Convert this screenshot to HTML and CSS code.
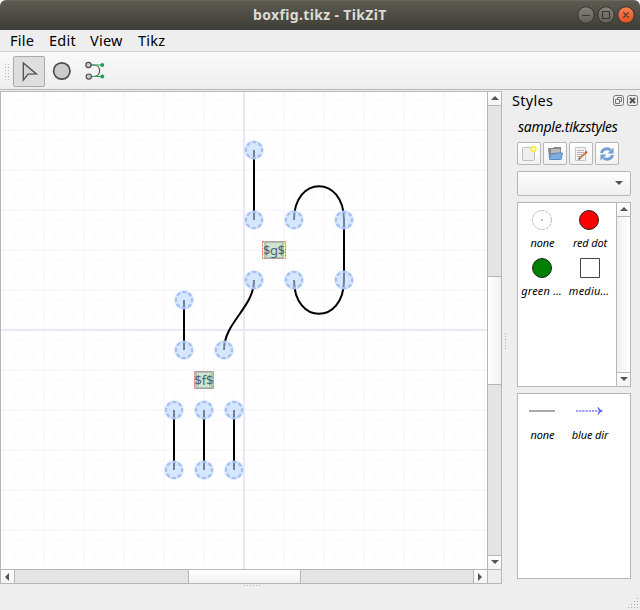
FILE: index.html
```html
<!DOCTYPE html>
<html lang="en">
<head>
<meta charset="utf-8">
<title>boxfig.tikz - TikZiT</title>
<link rel="stylesheet" href="styles.css">
</head>
<body>
<div class="window">
  <header class="titlebar">
    <span class="title">boxfig.tikz - TikZiT</span>
    <svg class="controls" width="58" height="18" viewBox="0 0 58 18">
      <defs>
        <linearGradient id="gray" x2="0" y2="1"><stop stop-color="#85847b"/><stop offset="1" stop-color="#605f58"/></linearGradient>
        <linearGradient id="orange" x2="0" y2="1"><stop stop-color="#f68256"/><stop offset="1" stop-color="#e2521f"/></linearGradient>
      </defs>
      <g stroke="#34332e"><circle cx="9" cy="9" r="8.2" fill="url(#gray)"/><circle cx="29" cy="9" r="8.2" fill="url(#gray)"/><circle cx="49" cy="9" r="8.2" fill="url(#orange)"/></g>
      <path d="M5 9.500h8M25.500 5.500h7v7h-7zM46.300 6.300l5.400 5.400m0-5.400l-5.400 5.400" fill="none" stroke="#383731" stroke-width="1.200"/>
    </svg>
  </header>
  <nav class="menubar"><span class="m1">File</span><span class="m2">Edit</span><span class="m3">View</span><span class="m4">Tikz</span></nav>
  <div class="toolbar">
    <svg class="grip" width="6" height="18"><path d="M.5 1v17M3.500 1v17" stroke="#b8b8b8" stroke-dasharray="1 2"/></svg>
    <div class="tool active"><svg width="32" height="32" viewBox="13 55.500 32 32"><path d="M23.300 62.500v17.200l4.800-6.100 8.300-.2z" fill="#d5d5d5" stroke="#505050" stroke-width="1.300"/></svg></div>
    <div class="tool"><svg width="32" height="32" viewBox="46 56 32 32"><circle cx="61.800" cy="71" r="8.200" fill="#ccc" stroke="#4d4d4d" stroke-width="1.700"/></svg></div>
    <div class="tool"><svg width="32" height="32" viewBox="79 56 32 32"><path d="M91 65h3c7.500 0 7.500 11.500 0 11.500h-3" fill="none" stroke="#555" stroke-width="1.200"/><path d="M91 65h11M91 76.500h11" stroke="#23a455" stroke-width="1.200"/><g fill="#ccc" stroke="#505050" stroke-width="1.200"><circle cx="88.500" cy="65" r="2.600"/><circle cx="88.800" cy="76.600" r="2.600"/></g><circle cx="102.300" cy="65" r="1.900" fill="#16a34b"/><circle cx="102.300" cy="76.500" r="1.900" fill="#16a34b"/></svg></div>
  </div>
  <main class="main">
    <section class="editor">
      <svg class="canvas" width="486" height="477" viewBox="1 92 486 477">
        <defs>
          <pattern id="minor" x="-1" y="-5" width="10" height="10" patternUnits="userSpaceOnUse"><path d="M5 0v10M0 5h10" stroke="#fafaff"/></pattern>
          <pattern id="major" x="-16" y="-10" width="40" height="40" patternUnits="userSpaceOnUse"><path d="M20 0v40M0 20h40" stroke="#f4f4fc"/></pattern>
          <g id="node"><circle r="9.800" fill="#bbd8ff" fill-opacity=".6"/><circle r="8" fill="none" stroke="#a8bfee" stroke-width="2.200" stroke-dasharray="4.200 2.080" stroke-dashoffset="2"/></g>
        </defs>
        <rect x="1" y="92" width="486" height="477" fill="#fff"/>
        <rect x="1" y="92" width="486" height="477" fill="url(#minor)"/>
        <rect x="1" y="92" width="486" height="477" fill="url(#major)"/>
        <path d="M244 92v477M1 330h486" stroke="#e8e8f6" stroke-width="2"/>
        <path d="M254 150v70M184 300v50M174 410v60M204 410v60M234 410v60M344 220v60M294 220C294 175 344 175 344 220M294 280C294 325 344 325 344 280M254 280C254 308 224 322 224 350" fill="none" stroke="#000" stroke-width="2"/>
        <use href="#node" x="254" y="150"/><use href="#node" x="254" y="220"/><use href="#node" x="294" y="220"/><use href="#node" x="344" y="220"/>
        <use href="#node" x="254" y="280"/><use href="#node" x="294" y="280"/><use href="#node" x="344" y="280"/>
        <use href="#node" x="184" y="300"/><use href="#node" x="184" y="350"/><use href="#node" x="224" y="350"/>
        <use href="#node" x="174" y="410"/><use href="#node" x="204" y="410"/><use href="#node" x="234" y="410"/>
        <use href="#node" x="174" y="470"/><use href="#node" x="204" y="470"/><use href="#node" x="234" y="470"/>
        <g class="label">
          <rect x="262.500" y="241.500" width="23" height="17" fill="#ffffa0" stroke="#e36565" stroke-dasharray="2 1"/>
          <rect x="265" y="242" width="18" height="16" fill="#cde5d0" stroke="#8caaa4" stroke-width="1.200"/>
          <text x="263" y="255" textLength="22">$g$</text>
          <rect x="194.500" y="371.500" width="19" height="17" fill="#f4ecc0" stroke="#e36565" stroke-dasharray="2 1"/>
          <rect x="196" y="372" width="16" height="16" fill="#cde5d0" stroke="#8caaa4" stroke-width="1.200"/>
          <text x="194.500" y="385" textLength="19">$f$</text>
        </g>
      </svg>
      <div class="vbar"><i class="arrow up"></i><i class="vthumb"></i><i class="arrow down"></i></div>
      <div class="hbar"><i class="arrow left"></i><i class="hthumb"></i><i class="arrow right"></i></div>
      <div class="corner"></div>
    </section>
    <svg class="splitter" width="4" height="18"><path d="M1.500 1v17" stroke="#aaa" stroke-dasharray="1 2"/></svg>
    <aside class="dock">
      <div class="dockhead"><span>Styles</span>
        <svg width="25" height="11" viewBox="0 0 25 11" fill="none" stroke="#777"><rect x=".5" y=".5" width="10" height="10" rx="2"/><rect x="14.500" y=".5" width="10" height="10" rx="2"/><path d="M4.500 4V2.500h4v4H7M2.500 4.500h4v4h-4z"/><path d="M17 3l5 5m0-5l-5 5" stroke="#555" stroke-width="2"/></svg>
      </div>
      <div class="file">sample.tikzstyles</div>
      <div class="buttons">
        <span class="btn"><svg width="16" height="16"><rect x="1.500" y="1.500" width="12" height="13" rx="1" fill="#eee" stroke="#bebebe"/><circle cx="12.500" cy="3" r="2.200" fill="#fff" stroke="#f5ed45" stroke-width="2"/></svg></span>
        <span class="btn"><svg width="16" height="16"><path d="M1 2h5l1-1h7v11H2z" fill="#85898c"/><path d="M4 3h9v4H4z" fill="#bbb"/><path d="M2.500 13.500l1-5.500h4l1-1h7l-1.500 6.500z" fill="#80aede" stroke="#5a8bc0"/></svg></span>
        <span class="btn"><svg width="16" height="16"><path d="M2.500 1.500h10v13h-10z" fill="#f3f3f3" stroke="#c4c4c4"/><path d="M4 4.500h7M4 6.500h7M4 8.500h5M4 10.500h4" stroke="#b5b5b5"/><path d="M7 12l6-5.500" stroke="#c97f3a" stroke-width="2"/><path d="M5.500 13.500L7 12" stroke="#333" stroke-width="1.300"/><path d="M12.500 7l1.500-1.400" stroke="#d44" stroke-width="2"/></svg></span>
        <span class="btn"><svg width="16" height="16"><path d="M2.500 7a5.500 5 0 0 1 9-3M13.500 9a5.500 5 0 0 1-9 3" fill="none" stroke="#6e9dd3" stroke-width="2.800"/><path d="M14.500 1.500v6H8.500zM1.500 14.500v-6h6z" fill="#6e9dd3"/></svg></span>
      </div>
      <div class="combo"><i></i></div>
      <div class="list nodes">
        <div class="items">
          <div class="item"><svg width="22" height="22"><circle cx="11" cy="11" r="9.500" fill="#fff" stroke="#b3b3dd" stroke-dasharray="3 1"/><circle cx="11" cy="11" r="1" fill="#aab"/></svg><span>none</span></div>
          <div class="item"><svg width="22" height="22"><circle cx="11" cy="11" r="9.500" fill="#f00" stroke="#222"/></svg><span>red dot</span></div>
          <div class="item"><svg width="22" height="22"><circle cx="11" cy="11" r="9.500" fill="#008000" stroke="#222"/></svg><span class="clipped">green …</span></div>
          <div class="item"><svg width="22" height="22"><path d="M2.500 1.500h19v19h-19z" fill="#fff" stroke="#444"/></svg><span class="clipped">mediu…</span></div>
        </div>
        <div class="listbar"><i class="arrow up"></i><i class="arrow down"></i></div>
      </div>
      <div class="list edges">
        <div class="items">
          <div class="item"><svg width="28" height="22"><path d="M1 9h26" stroke="#aaa" stroke-width="2"/></svg><span>none</span></div>
          <div class="item"><svg width="28" height="22"><path d="M1 9h24" stroke="#9c9cff" stroke-width="1.800" stroke-dasharray="2.200 1"/><path d="M23 5.500q1 2.800 3.500 3.500q-2.500.7-3.500 3.500" fill="none" stroke="#44f" stroke-width="1.200"/></svg><span>blue dir</span></div>
        </div>
      </div>
    </aside>
  </main>
  <footer class="status">
    <svg class="hgrip" width="18" height="3"><path d="M1 1.500h17" stroke="#b0b0b0" stroke-dasharray="1 2"/></svg>
    <svg class="sizer" width="12" height="12"><path d="M1 10.500h11M4 7.500h8M7 4.500h5M10 1.500h2" stroke="#aaa" stroke-dasharray="1 2"/></svg>
  </footer>
</div>
</body>
</html>
```
FILE: styles.css
```css
* { box-sizing: border-box; }
body { margin: 0; background: #fff; font: 14px "Noto Sans", "Open Sans", sans-serif; color: #000; }
svg { display: block; flex: none; }
.window { width: 640px; height: 610px; background: #eee; border-radius: 6px 6px 0 0; overflow: hidden; display: flex; flex-direction: column; }
.titlebar { height: 30px; flex: none; background: linear-gradient(#5c5a51, #3e3d37); border-top: 1px solid #68665d; display: flex; align-items: center; padding: 0 5px 0 253px; justify-content: space-between; }
.title { color: #dfdbd2; font-weight: 700; font-size: 14px; line-height: 28px; letter-spacing: .35px; margin-top: -2px; white-space: nowrap; }
.controls { margin-top: -1px; }
.menubar { height: 22px; flex: none; border-bottom: 1px solid #cfcfcf; display: flex; padding-left: 10px; line-height: 21px; font-size: 14.5px; letter-spacing: .25px; }
.m1 { width: 39px; }
.m2 { width: 41px; }
.m3 { width: 48px; }
.toolbar { height: 38px; flex: none; background: linear-gradient(#f9f9f9, #eee); border-bottom: 1px solid #b6b6b6; display: flex; padding: 4px 0 0 5px; }
.grip { margin: 7px 2px 0 0; }
.tool { width: 32px; height: 31px; margin-right: 1px; }
.active { background: #dedede; border: 1px solid #aaa; border-radius: 2px; }
.active svg { margin: -1px; }
.main { display: flex; height: 494px; flex: none; }
.editor { width: 502px; height: 493px; margin-top: 1px; border: 1px solid #b6b6b6; display: grid; grid-template: 477px 14px / 486px 14px; }
.vbar { border-left: 1px solid #b6b6b6; background: #e4e4e4; display: flex; flex-direction: column; }
.hbar { border-top: 1px solid #b6b6b6; background: #e4e4e4; display: flex; }
.corner { border: solid #b6b6b6; border-width: 1px 0 0 1px; }
.vthumb { height: 109px; margin-top: 170px; background: linear-gradient(90deg, #fff, #f0f0f0); border: solid #b6b6b6; border-width: 1px 0; }
.hthumb { width: 113px; margin-left: 173px; background: linear-gradient(#fff, #f0f0f0); border: solid #b6b6b6; border-width: 0 1px; }
.vbar .down, .listbar .down { margin-top: auto; }
.hbar .right { margin-left: auto; }
.arrow { width: 13px; height: 14px; background: linear-gradient(#fff, #f3f3f3); display: flex; align-items: center; justify-content: center; flex: none; }
.arrow::before { content: ""; border: 4px solid transparent; }
.up { border-bottom: 1px solid #b6b6b6; }
.up::before { border-top: 0; border-bottom-color: #555; margin-top: -1px; }
.down { border-top: 1px solid #b6b6b6; }
.down::before { border-bottom: 0; border-top-color: #555; margin-top: -2px; }
.left { width: 14px; height: 13px; border-right: 1px solid #b6b6b6; }
.left::before { border-left: 0; border-right-color: #555; margin-left: -1px; }
.right { width: 14px; height: 13px; border-left: 1px solid #b6b6b6; }
.right::before { border-right: 0; border-left-color: #555; margin-left: -2px; }
.label text { font: 13px "Noto Sans", sans-serif; fill: #49657d; }
.splitter { margin: 242px 0 0 2px; }
.dock { flex: 1; padding-left: 4px; }
.dockhead { height: 22px; display: flex; align-items: center; justify-content: space-between; padding-right: 2px; font-size: 14.5px; letter-spacing: .3px; }
.dockhead span { margin-top: -2px; }
.dockhead svg { margin-top: -1px; }
.file { height: 30px; margin-left: 5px; padding-left: 1px; line-height: 30px; font-size: 14px; font-style: italic; letter-spacing: -.25px; white-space: nowrap; }
.buttons { display: flex; gap: 2px; margin-left: 5px; }
.btn { width: 24px; height: 23px; border: 1px solid #b6b6b6; border-radius: 2px; background: linear-gradient(#fff, #f2f2f2); display: flex; align-items: center; justify-content: center; }
.combo { width: 114px; height: 25px; margin: 6px 0 6px 5px; border: 1px solid #b6b6b6; border-radius: 2px; background: linear-gradient(#fefefe, #efefef); display: flex; align-items: center; justify-content: flex-end; padding-right: 7px; }
.combo i { border: 4px solid transparent; border-top-color: #555; border-bottom: 0; margin-top: -1px; }
.list { width: 114px; margin-left: 5px; border: 1px solid #b6b6b6; background: #fff; display: flex; }
.nodes { height: 185px; }
.edges { height: 186px; margin-top: 6px; }
.items { display: grid; grid-template-columns: 48px 47px; grid-auto-rows: 48px; flex: 1; padding-top: 6px; }
.item { display: flex; flex-direction: column; align-items: center; font-size: 11px; font-style: italic; line-height: 24px; white-space: nowrap; letter-spacing: -.15px; padding-right: 1px; }
.item span { margin-left: 2px; }
.item .clipped { letter-spacing: .2px; margin-left: 0; }
.edges .item { padding-top: 2px; }
.edges .item span { margin-top: -1px; }
.listbar { width: 14px; border-left: 1px solid #b6b6b6; background: linear-gradient(90deg, #f0f0f0, #fff); display: flex; flex-direction: column; }
.status { flex: 1; display: flex; justify-content: space-between; padding-left: 243px; }
.sizer { margin: 13px 1px 0 0; }
```
